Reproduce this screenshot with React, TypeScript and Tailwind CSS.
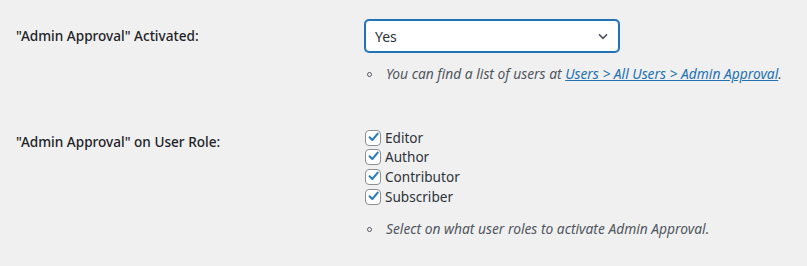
import { useState } from 'react'

const roles = ['Editor', 'Author', 'Contributor', 'Subscriber']

function Check({ checked, onChange }: { checked: boolean; onChange: () => void }) {
  return (
    <button
      type="button"
      onClick={onChange}
      className="w-4 h-4 shrink-0 bg-white border border-[#8c8f94] rounded-[4px] flex items-center justify-center"
    >
      {checked && (
        <svg viewBox="0 0 20 20" className="w-[20px] h-[20px] -mt-[2px] ml-[1px]">
          <path d="M4 10.5 L8.2 14.6 L16.5 4.8" fill="none" stroke="#2a7dbf" strokeWidth="3.2" strokeLinecap="round" strokeLinejoin="round" />
        </svg>
      )}
    </button>
  )
}

function Hint({ children }: { children: React.ReactNode }) {
  return (
    <div className="flex items-center text-[13.8px] italic text-[#50575e] leading-5">
      <span className="w-[5px] h-[5px] rounded-full border border-[#50575e] ml-[2px] mr-[14px] shrink-0" />
      <span>{children}</span>
    </div>
  )
}

export default function App() {
  const [active, setActive] = useState('Yes')
  const [checked, setChecked] = useState<Record<string, boolean>>({
    Editor: true, Author: true, Contributor: true, Subscriber: true,
  })

  return (
    <div className="w-[807px] h-[266px] bg-[#f0f0f1] text-[#1d2327] font-['Noto_Sans','Open_Sans',sans-serif] text-[14px]">
      <div className="grid grid-cols-[349px_1fr] pl-4">
        <div className="pt-[26px] font-medium text-[13.6px] leading-5">"Admin Approval" Activated:</div>
        <div className="pt-5">
          <div className="relative w-[254px]">
            <select
              value={active}
              onChange={e => setActive(e.target.value)}
              className="appearance-none w-full h-8 bg-white border border-[#2271b1] shadow-[0_0_0_1px_#2271b1] rounded-[4px] pl-[9px] text-[14px] text-[#2c3338] outline-none"
            >
              <option>Yes</option>
              <option>No</option>
            </select>
            <svg viewBox="0 0 20 20" className="absolute right-[8px] top-[8px] w-4 h-4 pointer-events-none">
              <path d="M5 8 L10 13 L15 8" fill="none" stroke="#50575e" strokeWidth="2" />
            </svg>
          </div>
          <div className="mt-[12px]">
            <Hint>
              You can find a list of users at{' '}
              <a href="#" className="text-[#2271b1] underline">Users &gt; All Users &gt; Admin Approval</a>.
            </Hint>
          </div>
        </div>

        <div className="pt-[48px] font-medium text-[13.6px] leading-5">"Admin Approval" on User Role:</div>
        <div className="pt-[44px]">
          <div className="flex flex-col text-[#2c3338] text-[13.6px]">
            {roles.map(r => (
              <label key={r} className="flex items-center h-[19.6px] gap-[4px] leading-5">
                <Check checked={checked[r]} onChange={() => setChecked({ ...checked, [r]: !checked[r] })} />
                <span>{r}</span>
              </label>
            ))}
          </div>
          <div className="mt-[13px]">
            <Hint>Select on what user roles to activate Admin Approval.</Hint>
          </div>
        </div>
      </div>
    </div>
  )
}
